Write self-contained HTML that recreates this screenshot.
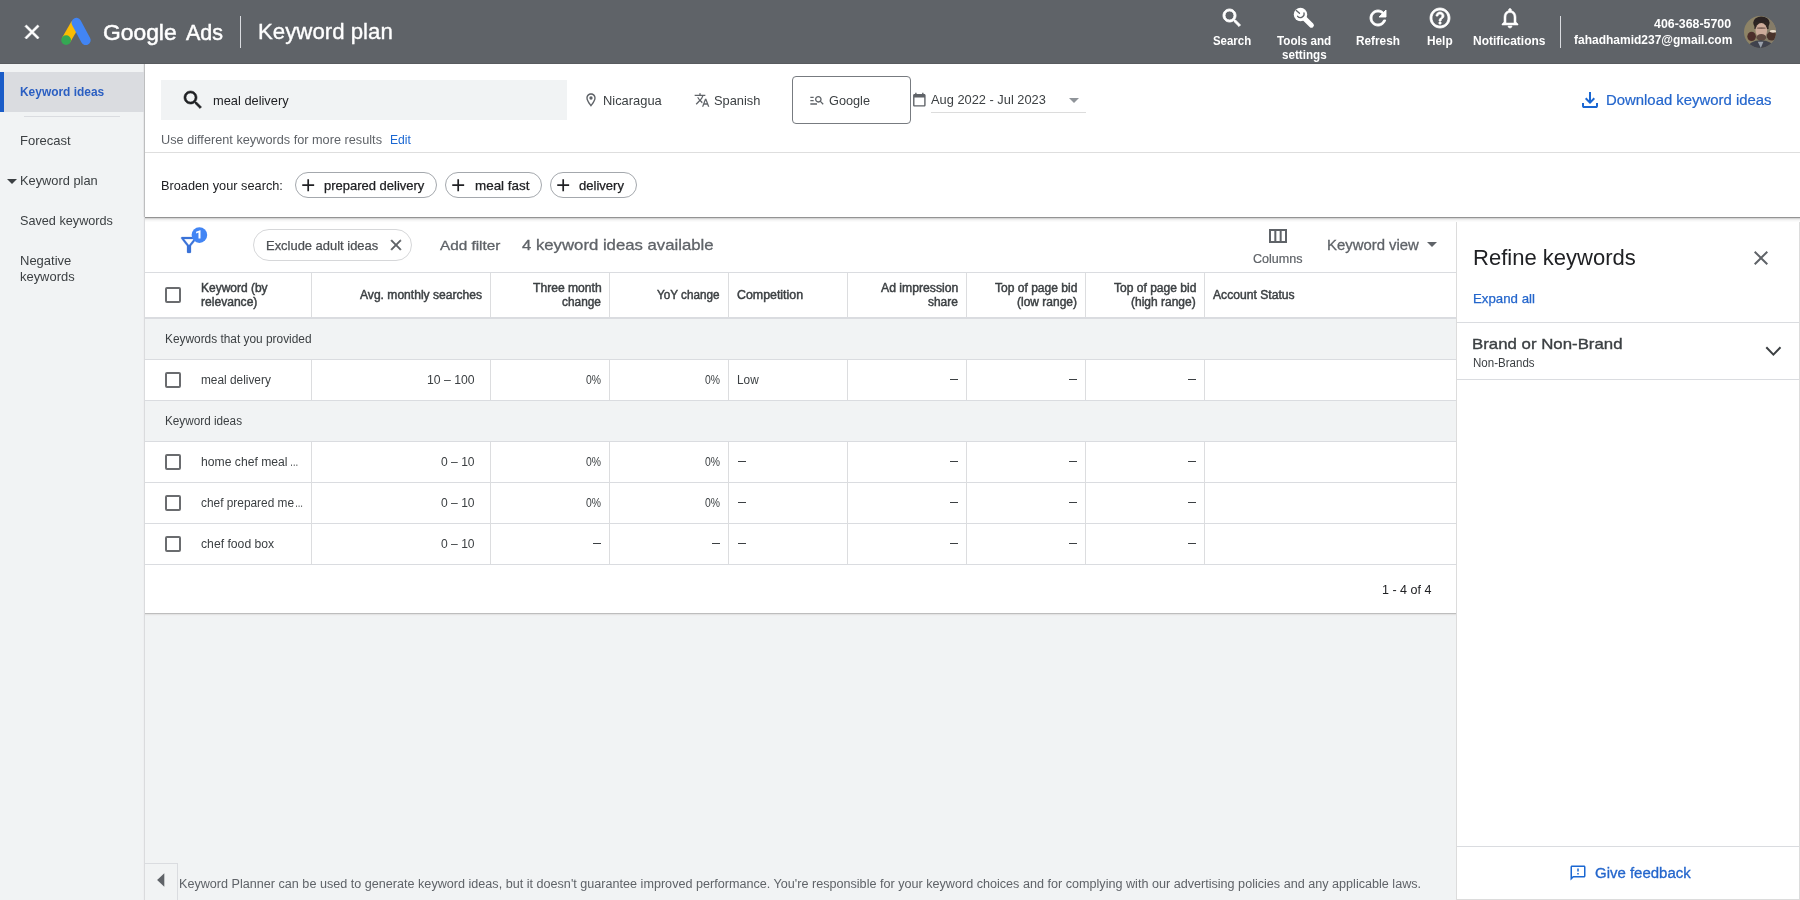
<!DOCTYPE html>
<html lang="en">
<head>
<meta charset="utf-8">
<title>Keyword plan - Google Ads</title>
<style>
*{box-sizing:border-box;margin:0;padding:0}
html,body{width:1800px;height:900px;overflow:hidden;background:#f1f3f4;font-family:"Liberation Sans",sans-serif}
.a{position:absolute}
.t{position:absolute;white-space:nowrap;line-height:1;transform-origin:0 0}
</style>
</head>
<body>
<div class="a" style="left:0px;top:0px;width:1800px;height:64px;background:#5f6368"></div>
<div class="a" style="left:0px;top:64px;width:144px;height:836px;background:#f1f3f4"></div>
<div class="a" style="left:0px;top:63px;width:1800px;height:1px;background:#585b5f"></div>
<div class="a" style="left:143px;top:64px;width:1px;height:153px;background:#e6e7e9"></div>
<div class="a" style="left:144px;top:64px;width:1px;height:153px;background:#bdbebf"></div>
<div class="a" style="left:143px;top:217px;width:1px;height:683px;background:#eeeff1"></div>
<div class="a" style="left:144px;top:217px;width:1px;height:683px;background:#dadbdd"></div>
<div class="a" style="left:145px;top:64px;width:1655px;height:153px;background:#fff"></div>
<div class="a" style="left:145px;top:218px;width:1311px;height:395px;background:#fff"></div>
<div class="a" style="left:1456px;top:218px;width:344px;height:682px;background:#fff;border:1px solid #dcdcdc;border-top:none"></div>
<div class="a" style="left:145px;top:217px;width:1655px;height:1px;background:#939393"></div>
<div class="a" style="left:145px;top:218px;width:1655px;height:1px;background:#d6d6d6"></div>
<div class="a" style="left:145px;top:219px;width:1655px;height:1px;background:#ececec"></div>
<div class="a" style="left:145px;top:220px;width:1655px;height:1px;background:#f6f6f6"></div>
<div class="a" style="left:145px;top:221px;width:1655px;height:1px;background:#fbfbfb"></div>
<div class="a" style="left:145px;top:613px;width:1311px;height:1px;background:#bdbdbd"></div>
<div class="a" style="left:145px;top:614px;width:1311px;height:1px;background:#e3e3e3"></div>
<div class="a" style="left:145px;top:615px;width:1311px;height:1px;background:#eeeff0"></div>
<svg class="a" style="left:20px;top:20px;overflow:visible" width="24" height="24" viewBox="0 0 24 24" fill="#fff" stroke="#fff" stroke-width="0.7" stroke-linejoin="round"><path d="M19 6.41L17.59 5 12 10.59 6.41 5 5 6.41 10.59 12 5 17.59 6.41 19 12 13.41 17.59 19 19 17.59 13.41 12z"/></svg>
<svg class="a" style="left:56px;top:12px" width="40" height="40" viewBox="56 12 40 40"><line x1="66.1" y1="40" x2="75.6" y2="23.6" stroke="#fbbc04" stroke-width="9.4" stroke-linecap="butt"/><line x1="76.4" y1="22.7" x2="85.8" y2="40.2" stroke="#4285f4" stroke-width="9.8" stroke-linecap="round"/><circle cx="66.1" cy="40.1" r="4.9" fill="#34a853"/></svg>
<div class="t" style="left:103.36px;top:22px;font-size:22px;color:#fff;transform:scaleX(1.0372);-webkit-text-stroke:0.5px #fff">Google</div>
<div class="t" style="left:185.60px;top:22px;font-size:22px;color:#fff;transform:scaleX(0.9760);-webkit-text-stroke:0.5px #fff">Ads</div>
<div class="a" style="left:240px;top:16px;width:1px;height:32px;background:#dadce0"></div>
<div class="t" style="left:257.69px;top:21px;font-size:22px;color:#fff;transform:scaleX(1.0110);-webkit-text-stroke:0.35px #fff">Keyword plan</div>
<svg class="a" style="left:1220.2px;top:6px;overflow:visible" width="24" height="24" viewBox="0 0 24 24" fill="#fff" stroke="#fff" stroke-width="0.9" stroke-linejoin="round"><path d="M15.5 14h-.79l-.28-.27C15.41 12.59 16 11.11 16 9.5 16 5.91 13.09 3 9.5 3S3 5.91 3 9.5 5.91 16 9.5 16c1.61 0 3.09-.59 4.23-1.57l.27.28v.79l5 4.99L20.49 19l-4.99-5zm-6 0C7.01 14 5 11.99 5 9.5S7.01 5 9.5 5 14 7.01 14 9.5 11.99 14 9.5 14z"/></svg>
<svg class="a" style="left:1365.8px;top:6px;overflow:visible" width="24" height="24" viewBox="0 0 24 24" fill="#fff" stroke="#fff" stroke-width="0.9" stroke-linejoin="round"><path d="M17.65 6.35C16.2 4.9 14.21 4 12 4c-4.42 0-7.99 3.58-7.99 8s3.57 8 7.99 8c3.73 0 6.84-2.55 7.73-6h-2.08c-.82 2.33-3.04 4-5.65 4-3.31 0-6-2.69-6-6s2.69-6 6-6c1.66 0 3.14.69 4.22 1.78L13 11h7V4l-2.35 2.35z"/></svg>
<svg class="a" style="left:1427.6px;top:6px;overflow:visible" width="24" height="24" viewBox="0 0 24 24" fill="#fff" stroke="#fff" stroke-width="0.8" stroke-linejoin="round"><path d="M11 18h2v-2h-2v2zm1-16C6.48 2 2 6.48 2 12s4.48 10 10 10 10-4.48 10-10S17.52 2 12 2zm0 18c-4.41 0-8-3.59-8-8s3.59-8 8-8 8 3.59 8 8-3.59 8-8 8zm0-14c-2.21 0-4 1.79-4 4h2c0-1.1.9-2 2-2s2 .9 2 2c0 2-3 1.75-3 5h2c0-2.25 3-2.5 3-5 0-2.21-1.79-4-4-4z"/></svg>
<svg class="a" style="left:1498px;top:6px;overflow:visible" width="24" height="24" viewBox="0 0 24 24" fill="#fff" stroke="#fff" stroke-width="0.55" stroke-linejoin="round"><path d="M12 22c1.1 0 2-.9 2-2h-4c0 1.1.9 2 2 2zm6-6v-5c0-3.07-1.63-5.64-4.5-6.32V4c0-.83-.67-1.5-1.5-1.5s-1.5.67-1.5 1.5v.68C7.64 5.36 6 7.92 6 11v5l-2 2v1h16v-1l-2-2zm-2 1H8v-6c0-2.48 1.51-4.5 4-4.5s4 2.02 4 4.5v6z"/></svg>
<svg class="a" style="left:1288px;top:2px" width="32" height="30" viewBox="1288 2 32 30"><circle cx="1300.5" cy="14.5" r="6.7" fill="#fff"/><line x1="1300.5" y1="14.5" x2="1311.4" y2="25.2" stroke="#fff" stroke-width="5" stroke-linecap="round"/><path d="M1296.3 10.4 L1299.5 13.3 M1297.6 16.3 A3.7 3.7 0 0 0 1304 13" stroke="#5f6368" stroke-width="1.3" fill="none" stroke-linecap="round"/></svg>
<div class="t" style="left:1213.30px;top:35px;font-size:12px;color:#fff;transform:scaleX(0.9523);font-weight:bold">Search</div>
<div class="t" style="left:1277.20px;top:35px;font-size:12px;color:#fff;transform:scaleX(0.9721);font-weight:bold">Tools and</div>
<div class="t" style="left:1281.70px;top:49px;font-size:12px;color:#fff;transform:scaleX(0.9712);font-weight:bold">settings</div>
<div class="t" style="left:1355.80px;top:35px;font-size:12px;color:#fff;transform:scaleX(0.9830);font-weight:bold">Refresh</div>
<div class="t" style="left:1427.00px;top:35px;font-size:12px;color:#fff;transform:scaleX(0.9854);font-weight:bold">Help</div>
<div class="t" style="left:1473.30px;top:35px;font-size:12px;color:#fff;transform:scaleX(0.9960);font-weight:bold">Notifications</div>
<div class="a" style="left:1560px;top:16px;width:1px;height:32px;background:#dadce0"></div>
<div class="t" style="left:1654.30px;top:18px;font-size:12px;color:#fff;transform:scaleX(1.0312);font-weight:bold">406-368-5700</div>
<div class="t" style="left:1574.00px;top:34px;font-size:12px;color:#fff;transform:scaleX(0.9997);font-weight:bold">fahadhamid237@gmail.com</div>
<svg class="a" style="left:1744px;top:16px" width="32" height="32" viewBox="0 0 32 32"><defs><clipPath id="av"><circle cx="16" cy="16" r="16"/></clipPath><filter id="bl" x="-20%" y="-20%" width="140%" height="140%"><feGaussianBlur stdDeviation="0.75"/></filter></defs>
<g clip-path="url(#av)"><rect width="32" height="32" fill="#8d8366"/><g filter="url(#bl)">
<rect x="22" y="0" width="10" height="32" fill="#857c68"/>
<ellipse cx="7.6" cy="20.4" rx="4.3" ry="4.6" fill="#4d2f2c"/>
<ellipse cx="27.8" cy="20" rx="5" ry="4.6" fill="#4a302b"/>
<ellipse cx="29" cy="15.3" rx="3.2" ry="1.4" fill="#eadccb"/>
<ellipse cx="17.4" cy="6.8" rx="8.2" ry="6.4" fill="#2a2220"/>
<rect x="10.4" y="6" width="14.2" height="7" fill="#2f2624"/>
<ellipse cx="17.3" cy="14.6" rx="5.8" ry="7.6" fill="#cdab9a"/>
<ellipse cx="17.3" cy="12.1" rx="4.6" ry="0.9" fill="#7d6258"/>
<ellipse cx="17.3" cy="21.4" rx="4.9" ry="3.5" fill="#5f4941"/>
<ellipse cx="16.8" cy="31.8" rx="13" ry="7.6" fill="#3f434d"/>
<path d="M13.8 25.8 L16.8 32 L19.4 25.8 Z" fill="#9aa0ab"/>
</g></g></svg>
<div class="a" style="left:0px;top:72px;width:144px;height:40px;background:#dadce0"></div>
<div class="a" style="left:0px;top:72px;width:4px;height:40px;background:#1a5cc8"></div>
<div class="t" style="left:20.20px;top:85px;font-size:13px;color:#2b5fc2;transform:scaleX(0.9178);font-weight:bold">Keyword ideas</div>
<div class="a" style="left:24px;top:116px;width:96px;height:1px;background:#dadce0"></div>
<div class="t" style="left:19.90px;top:134px;font-size:13px;color:#3c4043;transform:scaleX(1.0028)">Forecast</div>
<svg class="a" style="left:-0.2px;top:168.7px;overflow:visible" width="24" height="24" viewBox="0 0 24 24" fill="#3c4043"><path d="M7 10l5 5 5-5z"/></svg>
<div class="t" style="left:19.91px;top:174px;font-size:13px;color:#3c4043;transform:scaleX(0.9866)">Keyword plan</div>
<div class="t" style="left:19.90px;top:214px;font-size:13px;color:#3c4043;transform:scaleX(0.9741)">Saved keywords</div>
<div class="t" style="left:19.90px;top:254px;font-size:13px;color:#3c4043;transform:scaleX(1.0004)">Negative</div>
<div class="t" style="left:19.90px;top:270px;font-size:13px;color:#3c4043;transform:scaleX(0.9945)">keywords</div>
<div class="a" style="left:161px;top:80px;width:406px;height:40px;background:#f1f3f4"></div>
<svg class="a" style="left:181px;top:87.7px;overflow:visible" width="24" height="24" viewBox="0 0 24 24" fill="#202124" stroke="#202124" stroke-width="0.6" stroke-linejoin="round"><path d="M15.5 14h-.79l-.28-.27C15.41 12.59 16 11.11 16 9.5 16 5.91 13.09 3 9.5 3S3 5.91 3 9.5 5.91 16 9.5 16c1.61 0 3.09-.59 4.23-1.57l.27.28v.79l5 4.99L20.49 19l-4.99-5zm-6 0C7.01 14 5 11.99 5 9.5S7.01 5 9.5 5 14 7.01 14 9.5 11.99 14 9.5 14z"/></svg>
<div class="t" style="left:213.20px;top:94px;font-size:13px;color:#202124;transform:scaleX(0.9872)">meal delivery</div>
<svg class="a" style="left:583px;top:92px;overflow:visible" width="16" height="16" viewBox="0 0 24 24" fill="#5f6368"><path d="M12 2C8.13 2 5 5.13 5 9c0 5.25 7 13 7 13s7-7.75 7-13c0-3.87-3.13-7-7-7zM7 9c0-2.76 2.24-5 5-5s5 2.24 5 5c0 2.88-2.88 7.19-5 9.88C9.92 16.21 7 11.85 7 9z"/><circle cx="12" cy="9" r="2.5"/></svg>
<div class="t" style="left:602.51px;top:94px;font-size:13px;color:#3c4043;transform:scaleX(0.9911)">Nicaragua</div>
<svg class="a" style="left:694px;top:92px;overflow:visible" width="16" height="16" viewBox="0 0 24 24" fill="#5f6368"><path d="M12.87 15.07l-2.54-2.51.03-.03c1.74-1.94 2.98-4.17 3.71-6.53H17V4h-7V2H8v2H1v1.99h11.17C11.5 7.92 10.44 9.75 9 11.35 8.07 10.32 7.3 9.19 6.69 8h-2c.73 1.63 1.73 3.17 2.98 4.56l-5.09 5.02L4 19l5-5 3.11 3.11.76-2.04zM18.5 10h-2L12 22h2l1.12-3h4.75L21 22h2l-4.5-12zm-2.62 7l1.62-4.33L19.12 17h-3.24z"/></svg>
<div class="t" style="left:714.30px;top:94px;font-size:13px;color:#3c4043;transform:scaleX(0.9883)">Spanish</div>
<div class="a" style="left:792px;top:76px;width:119px;height:48px;border:1px solid #777b80;border-radius:4px"></div>
<svg class="a" style="left:808.5px;top:92.3px;overflow:visible" width="16" height="16" viewBox="0 0 24 24" fill="#5f6368"><path d="M7 9H2V7h5v2zm0 3H2v2h5v-2zm13.59 7l-3.83-3.83c-.8.52-1.74.83-2.76.83-2.76 0-5-2.24-5-5s2.24-5 5-5 5 2.24 5 5c0 1.02-.31 1.96-.83 2.75L22 17.59 20.59 19zM17 11c0-1.65-1.35-3-3-3s-3 1.35-3 3 1.35 3 3 3 3-1.35 3-3zM2 19h10v-2H2v2z"/></svg>
<div class="t" style="left:829.40px;top:94px;font-size:13px;color:#3c4043;transform:scaleX(0.9787)">Google</div>
<svg class="a" style="left:911.1px;top:92.2px;overflow:visible" width="16.7" height="16.7" viewBox="0 0 24 24" fill="#5f6368"><path d="M19 3h-1V1h-2v2H8V1H6v2H5c-1.11 0-1.99.9-1.99 2L3 19c0 1.1.89 2 2 2h14c1.1 0 2-.9 2-2V5c0-1.1-.9-2-2-2zm0 16H5V8h14v11z"/></svg>
<div class="t" style="left:930.90px;top:93px;font-size:13px;color:#3c4043;transform:scaleX(0.9868)">Aug 2022 - Jul 2023</div>
<svg class="a" style="left:1062.3px;top:87.7px;overflow:visible" width="24" height="24" viewBox="0 0 24 24" fill="#8f9499"><path d="M7 10l5 5 5-5z"/></svg>
<div class="a" style="left:931px;top:112px;width:155px;height:1px;background:#dcdcdc"></div>
<svg class="a" style="left:1578px;top:88px;overflow:visible" width="24" height="24" viewBox="0 0 24 24" fill="#1a67d2"><path d="M12 16 L7 11 l1.4 -1.45 L11 12.15 V4 h2 v8.15 l2.6 -2.6 L17 11 Z M6 20 q-.825 0 -1.4125 -.5875 T4 18 v-3 h2 v3 h12 v-3 h2 v3 q0 .825 -.5875 1.4125 T18 20 H6 Z"/></svg>
<div class="t" style="left:1605.94px;top:93px;font-size:14px;color:#2466cc;transform:scaleX(1.0631);-webkit-text-stroke:0.2px #2466cc">Download keyword ideas</div>
<div class="t" style="left:161.00px;top:134px;font-size:12px;color:#5f6368;transform:scaleX(1.0598)">Use different keywords for more results</div>
<div class="t" style="left:390.40px;top:134px;font-size:12px;color:#1a67d2;transform:scaleX(1.0120)">Edit</div>
<div class="a" style="left:145px;top:152px;width:1655px;height:1px;background:#dedede"></div>
<div class="t" style="left:160.92px;top:179px;font-size:13px;color:#202124;transform:scaleX(0.9806)">Broaden your search:</div>
<div class="a" style="left:295px;top:172px;width:142px;height:26px;border:1px solid #a4a8ad;border-radius:13px;background:#fff"></div>
<svg class="a" style="left:297.9px;top:174.8px;overflow:visible" width="20.4" height="20.4" viewBox="0 0 24 24" fill="#202124"><path d="M19 13h-6v6h-2v-6H5v-2h6V5h2v6h6v2z"/></svg>
<div class="t" style="left:324.00px;top:179px;font-size:13px;color:#202124;transform:scaleX(0.9986);-webkit-text-stroke:0.25px #202124">prepared delivery</div>
<div class="a" style="left:445px;top:172px;width:97px;height:26px;border:1px solid #a4a8ad;border-radius:13px;background:#fff"></div>
<svg class="a" style="left:448.3px;top:174.8px;overflow:visible" width="20.4" height="20.4" viewBox="0 0 24 24" fill="#202124"><path d="M19 13h-6v6h-2v-6H5v-2h6V5h2v6h6v2z"/></svg>
<div class="t" style="left:474.70px;top:179px;font-size:13px;color:#202124;transform:scaleX(1.0314);-webkit-text-stroke:0.25px #202124">meal fast</div>
<div class="a" style="left:550px;top:172px;width:87px;height:26px;border:1px solid #a4a8ad;border-radius:13px;background:#fff"></div>
<svg class="a" style="left:553.3px;top:174.8px;overflow:visible" width="20.4" height="20.4" viewBox="0 0 24 24" fill="#202124"><path d="M19 13h-6v6h-2v-6H5v-2h6V5h2v6h6v2z"/></svg>
<div class="t" style="left:579.30px;top:179px;font-size:13px;color:#202124;transform:scaleX(1.0045);-webkit-text-stroke:0.25px #202124">delivery</div>
<svg class="a" style="left:177.2px;top:233.2px;overflow:visible" width="24" height="24" viewBox="0 0 24 24" fill="#3a72d8" stroke="#3a72d8" stroke-width="0.25" stroke-linejoin="round"><path d="M7 6h10l-5.01 6.3L7 6zm-2.75-.39C6.27 8.2 10 13 10 13v6c0 .55.45 1 1 1h2c.55 0 1-.45 1-1v-6s3.72-4.8 5.74-7.39c.51-.66.04-1.61-.79-1.61H5.04c-.83 0-1.3.95-.79 1.61z"/></svg>
<svg class="a" style="left:191px;top:227px" width="17" height="17" viewBox="0 0 17 17"><circle cx="8.4" cy="8.1" r="7.8" fill="#4285f4"/></svg>
<svg class="a" style="left:190px;top:226px" width="20" height="20" viewBox="190 226 20 20"><path d="M200.5 230.3 V238.4 H198.5 V232.6 L196.1 233.4 V231.8 L200.1 230.3 Z" fill="#fff"/></svg>
<div class="a" style="left:253px;top:229px;width:159px;height:32px;border:1px solid #d6d7d9;border-radius:16px;background:#fff"></div>
<div class="t" style="left:265.50px;top:239px;font-size:13px;color:#4d5054;transform:scaleX(0.9952);-webkit-text-stroke:0.25px #4d5054">Exclude adult ideas</div>
<svg class="a" style="left:387px;top:236px;overflow:visible" width="18" height="18" viewBox="0 0 24 24" fill="#5f6368" stroke="#5f6368" stroke-width="0.7" stroke-linejoin="round"><path d="M19 6.41L17.59 5 12 10.59 6.41 5 5 6.41 10.59 12 5 17.59 6.41 19 12 13.41 17.59 19 19 17.59 13.41 12z"/></svg>
<div class="t" style="left:440.20px;top:239px;font-size:13px;color:#5f6368;transform:scaleX(1.1737);-webkit-text-stroke:0.3px #5f6368">Add filter</div>
<div class="t" style="left:522.40px;top:237px;font-size:15px;color:#5f6368;transform:scaleX(1.1154);-webkit-text-stroke:0.3px #5f6368">4 keyword ideas available</div>
<svg class="a" style="left:1266px;top:224.1px;overflow:visible" width="24" height="24" viewBox="0 0 24 24" fill="#5f6368"><path d="M3 5v14h18V5H3zm5.33 12H5V7h3.33v10zm5.34 0h-3.33V7h3.33v10zM19 17h-3.33V7H19v10z"/></svg>
<div class="t" style="left:1252.80px;top:253px;font-size:12px;color:#5f6368;transform:scaleX(1.0475);-webkit-text-stroke:0.2px #5f6368">Columns</div>
<div class="t" style="left:1326.64px;top:238px;font-size:14px;color:#5f6368;transform:scaleX(1.0631);-webkit-text-stroke:0.3px #5f6368">Keyword view</div>
<svg class="a" style="left:1420px;top:232.2px;overflow:visible" width="24" height="24" viewBox="0 0 24 24" fill="#5f6368"><path d="M7 10l5 5 5-5z"/></svg>
<div class="a" style="left:145px;top:272px;width:1311px;height:1px;background:#dadce0"></div>
<div class="a" style="left:145px;top:317px;width:1311px;height:2px;background:#dadce0"></div>
<div class="a" style="left:145px;top:319px;width:1311px;height:40px;background:#f1f3f4"></div>
<div class="a" style="left:145px;top:401px;width:1311px;height:40px;background:#f1f3f4"></div>
<div class="a" style="left:145px;top:359px;width:1311px;height:1px;background:#dadce0"></div>
<div class="a" style="left:145px;top:400px;width:1311px;height:1px;background:#dadce0"></div>
<div class="a" style="left:145px;top:441px;width:1311px;height:1px;background:#dadce0"></div>
<div class="a" style="left:145px;top:482px;width:1311px;height:1px;background:#dadce0"></div>
<div class="a" style="left:145px;top:523px;width:1311px;height:1px;background:#dadce0"></div>
<div class="a" style="left:145px;top:564px;width:1311px;height:1px;background:#dadce0"></div>
<div class="a" style="left:311px;top:273px;width:1px;height:44px;background:#dcdddf"></div>
<div class="a" style="left:311px;top:360px;width:1px;height:40px;background:#dcdddf"></div>
<div class="a" style="left:311px;top:442px;width:1px;height:122px;background:#dcdddf"></div>
<div class="a" style="left:490px;top:273px;width:1px;height:44px;background:#dcdddf"></div>
<div class="a" style="left:490px;top:360px;width:1px;height:40px;background:#dcdddf"></div>
<div class="a" style="left:490px;top:442px;width:1px;height:122px;background:#dcdddf"></div>
<div class="a" style="left:609px;top:273px;width:1px;height:44px;background:#dcdddf"></div>
<div class="a" style="left:609px;top:360px;width:1px;height:40px;background:#dcdddf"></div>
<div class="a" style="left:609px;top:442px;width:1px;height:122px;background:#dcdddf"></div>
<div class="a" style="left:728px;top:273px;width:1px;height:44px;background:#dcdddf"></div>
<div class="a" style="left:728px;top:360px;width:1px;height:40px;background:#dcdddf"></div>
<div class="a" style="left:728px;top:442px;width:1px;height:122px;background:#dcdddf"></div>
<div class="a" style="left:847px;top:273px;width:1px;height:44px;background:#dcdddf"></div>
<div class="a" style="left:847px;top:360px;width:1px;height:40px;background:#dcdddf"></div>
<div class="a" style="left:847px;top:442px;width:1px;height:122px;background:#dcdddf"></div>
<div class="a" style="left:966px;top:273px;width:1px;height:44px;background:#dcdddf"></div>
<div class="a" style="left:966px;top:360px;width:1px;height:40px;background:#dcdddf"></div>
<div class="a" style="left:966px;top:442px;width:1px;height:122px;background:#dcdddf"></div>
<div class="a" style="left:1085px;top:273px;width:1px;height:44px;background:#dcdddf"></div>
<div class="a" style="left:1085px;top:360px;width:1px;height:40px;background:#dcdddf"></div>
<div class="a" style="left:1085px;top:442px;width:1px;height:122px;background:#dcdddf"></div>
<div class="a" style="left:1204px;top:273px;width:1px;height:44px;background:#dcdddf"></div>
<div class="a" style="left:1204px;top:360px;width:1px;height:40px;background:#dcdddf"></div>
<div class="a" style="left:1204px;top:442px;width:1px;height:122px;background:#dcdddf"></div>
<div class="a" style="left:165px;top:287px;width:16px;height:16px;border:2px solid #6a6c6f;border-radius:2px;background:#fff"></div>
<div class="t" style="left:201.40px;top:282px;font-size:12px;color:#3c4043;transform:scaleX(0.9986);-webkit-text-stroke:0.45px #3c4043">Keyword (by</div>
<div class="t" style="left:201.40px;top:296px;font-size:12px;color:#3c4043;transform:scaleX(1.0066);-webkit-text-stroke:0.45px #3c4043">relevance)</div>
<div class="t" style="left:360.30px;top:289px;font-size:12px;color:#3c4043;transform:scaleX(1.0068);-webkit-text-stroke:0.45px #3c4043">Avg. monthly searches</div>
<div class="t" style="left:532.70px;top:282px;font-size:12px;color:#3c4043;transform:scaleX(1.0095);-webkit-text-stroke:0.45px #3c4043">Three month</div>
<div class="t" style="left:562.00px;top:296px;font-size:12px;color:#3c4043;transform:scaleX(0.9900);-webkit-text-stroke:0.45px #3c4043">change</div>
<div class="t" style="left:656.70px;top:289px;font-size:12px;color:#3c4043;transform:scaleX(0.9751);-webkit-text-stroke:0.45px #3c4043">YoY change</div>
<div class="t" style="left:737.30px;top:289px;font-size:12px;color:#3c4043;transform:scaleX(1.0322);-webkit-text-stroke:0.45px #3c4043">Competition</div>
<div class="t" style="left:881.00px;top:282px;font-size:12px;color:#3c4043;transform:scaleX(1.0178);-webkit-text-stroke:0.45px #3c4043">Ad impression</div>
<div class="t" style="left:928.30px;top:296px;font-size:12px;color:#3c4043;transform:scaleX(0.9953);-webkit-text-stroke:0.45px #3c4043">share</div>
<div class="t" style="left:995.00px;top:282px;font-size:12px;color:#3c4043;transform:scaleX(1.0038);-webkit-text-stroke:0.45px #3c4043">Top of page bid</div>
<div class="t" style="left:1016.70px;top:296px;font-size:12px;color:#3c4043;transform:scaleX(0.9995);-webkit-text-stroke:0.45px #3c4043">(low range)</div>
<div class="t" style="left:1114.00px;top:282px;font-size:12px;color:#3c4043;transform:scaleX(1.0038);-webkit-text-stroke:0.45px #3c4043">Top of page bid</div>
<div class="t" style="left:1131.00px;top:296px;font-size:12px;color:#3c4043;transform:scaleX(0.9999);-webkit-text-stroke:0.45px #3c4043">(high range)</div>
<div class="t" style="left:1213.30px;top:289px;font-size:12px;color:#3c4043;transform:scaleX(1.0122);-webkit-text-stroke:0.45px #3c4043">Account Status</div>
<div class="t" style="left:164.60px;top:333px;font-size:12px;color:#3c4043;transform:scaleX(0.9898)">Keywords that you provided</div>
<div class="t" style="left:164.60px;top:415px;font-size:12px;color:#3c4043;transform:scaleX(0.9783)">Keyword ideas</div>
<div class="a" style="left:165px;top:372.2px;width:16px;height:16px;border:2px solid #6a6c6f;border-radius:2px;background:#fff"></div><div class="t" style="left:200.70px;top:374px;font-size:12px;color:#3c4043;transform:scaleX(0.9874)">meal delivery</div><div class="t" style="left:426.60px;top:374px;font-size:12px;color:#3c4043;transform:scaleX(1.0183)">10 – 100</div><div class="t" style="left:586.00px;top:374px;font-size:12px;color:#3c4043;transform:scaleX(0.8657)">0%</div><div class="t" style="left:705.00px;top:374px;font-size:12px;color:#3c4043;transform:scaleX(0.8657)">0%</div><div class="t" style="left:737.30px;top:374px;font-size:12px;color:#3c4043;transform:scaleX(0.9844)">Low</div><div class="a" style="left:949.5px;top:379.2px;width:8.2px;height:1px;background:#3c4043"></div><div class="a" style="left:1068.5px;top:379.2px;width:8.2px;height:1px;background:#3c4043"></div><div class="a" style="left:1187.5px;top:379.2px;width:8.2px;height:1px;background:#3c4043"></div>
<div class="a" style="left:165px;top:454.2px;width:16px;height:16px;border:2px solid #6a6c6f;border-radius:2px;background:#fff"></div><div class="t" style="left:290.10px;top:456px;font-size:12px;color:#3c4043;transform:scaleX(0.7000)">…</div><div class="t" style="left:200.70px;top:456px;font-size:12px;color:#3c4043;transform:scaleX(1.0140)">home chef meal</div><div class="t" style="left:440.60px;top:456px;font-size:12px;color:#3c4043;transform:scaleX(1.0062)">0 – 10</div><div class="t" style="left:586.00px;top:456px;font-size:12px;color:#3c4043;transform:scaleX(0.8657)">0%</div><div class="t" style="left:705.00px;top:456px;font-size:12px;color:#3c4043;transform:scaleX(0.8657)">0%</div><div class="a" style="left:737.5px;top:461.2px;width:8.2px;height:1px;background:#3c4043"></div><div class="a" style="left:949.5px;top:461.2px;width:8.2px;height:1px;background:#3c4043"></div><div class="a" style="left:1068.5px;top:461.2px;width:8.2px;height:1px;background:#3c4043"></div><div class="a" style="left:1187.5px;top:461.2px;width:8.2px;height:1px;background:#3c4043"></div>
<div class="a" style="left:165px;top:495.2px;width:16px;height:16px;border:2px solid #6a6c6f;border-radius:2px;background:#fff"></div><div class="t" style="left:294.72px;top:497px;font-size:12px;color:#3c4043;transform:scaleX(0.6800)">…</div><div class="t" style="left:200.70px;top:497px;font-size:12px;color:#3c4043;transform:scaleX(0.9896)">chef prepared me</div><div class="t" style="left:440.60px;top:497px;font-size:12px;color:#3c4043;transform:scaleX(1.0062)">0 – 10</div><div class="t" style="left:586.00px;top:497px;font-size:12px;color:#3c4043;transform:scaleX(0.8657)">0%</div><div class="t" style="left:705.00px;top:497px;font-size:12px;color:#3c4043;transform:scaleX(0.8657)">0%</div><div class="a" style="left:737.5px;top:502.2px;width:8.2px;height:1px;background:#3c4043"></div><div class="a" style="left:949.5px;top:502.2px;width:8.2px;height:1px;background:#3c4043"></div><div class="a" style="left:1068.5px;top:502.2px;width:8.2px;height:1px;background:#3c4043"></div><div class="a" style="left:1187.5px;top:502.2px;width:8.2px;height:1px;background:#3c4043"></div>
<div class="a" style="left:165px;top:536.2px;width:16px;height:16px;border:2px solid #6a6c6f;border-radius:2px;background:#fff"></div><div class="t" style="left:200.70px;top:538px;font-size:12px;color:#3c4043;transform:scaleX(1.0159)">chef food box</div><div class="t" style="left:440.60px;top:538px;font-size:12px;color:#3c4043;transform:scaleX(1.0062)">0 – 10</div><div class="a" style="left:592.5px;top:543.2px;width:8.2px;height:1px;background:#3c4043"></div><div class="a" style="left:711.5px;top:543.2px;width:8.2px;height:1px;background:#3c4043"></div><div class="a" style="left:737.5px;top:543.2px;width:8.2px;height:1px;background:#3c4043"></div><div class="a" style="left:949.5px;top:543.2px;width:8.2px;height:1px;background:#3c4043"></div><div class="a" style="left:1068.5px;top:543.2px;width:8.2px;height:1px;background:#3c4043"></div><div class="a" style="left:1187.5px;top:543.2px;width:8.2px;height:1px;background:#3c4043"></div>
<div class="t" style="left:1382.30px;top:584px;font-size:12px;color:#202124;transform:scaleX(1.0422)">1 - 4 of 4</div>
<div class="t" style="left:1473.00px;top:247px;font-size:22px;color:#202124;transform:scaleX(1.0005)">Refine keywords</div>
<svg class="a" style="left:1749.2px;top:246.3px;overflow:visible" width="24" height="24" viewBox="0 0 24 24" fill="#5f6368"><path d="M19 6.41L17.59 5 12 10.59 6.41 5 5 6.41 10.59 12 5 17.59 6.41 19 12 13.41 17.59 19 19 17.59 13.41 12z"/></svg>
<div class="t" style="left:1472.78px;top:292px;font-size:13px;color:#2466cc;transform:scaleX(1.0197);-webkit-text-stroke:0.25px #2466cc">Expand all</div>
<div class="a" style="left:1457px;top:322px;width:342px;height:1px;background:#dadce0"></div>
<div class="t" style="left:1472.48px;top:336px;font-size:15px;color:#3c4043;transform:scaleX(1.1212);-webkit-text-stroke:0.35px #3c4043">Brand or Non-Brand</div>
<div class="t" style="left:1473.20px;top:357px;font-size:12px;color:#3c4043;transform:scaleX(0.9620)">Non-Brands</div>
<svg class="a" style="left:1760px;top:340px" width="28" height="24" viewBox="1760 340 28 24"><polyline points="1766.3,347.3 1773.4,354.6 1780.5,347.3" fill="none" stroke="#3c4043" stroke-width="2"/></svg>
<div class="a" style="left:1457px;top:379px;width:342px;height:1px;background:#dadce0"></div>
<div class="a" style="left:1457px;top:846px;width:342px;height:1px;background:#dadce0"></div>
<svg class="a" style="left:1568.6px;top:863.8px;overflow:visible" width="18" height="18" viewBox="0 0 24 24" fill="#1a67d2"><path d="M20 2H4c-1.1 0-1.99.9-1.99 2L2 22l4-4h14c1.1 0 2-.9 2-2V4c0-1.1-.9-2-2-2zm0 14H5.17l-.59.59-.58.58V4h16v12zm-9-4h2v2h-2zm0-6h2v4h-2z"/></svg>
<div class="t" style="left:1594.60px;top:866px;font-size:14px;color:#2466cc;transform:scaleX(1.0697);-webkit-text-stroke:0.3px #2466cc">Give feedback</div>
<div class="a" style="left:145px;top:863px;width:33px;height:37px;border:1px solid #dadce0;border-left:none;border-bottom:none;background:#f1f3f4"></div>
<svg class="a" style="left:150px;top:868px" width="24" height="24" viewBox="150 868 24 24"><polygon points="164.3,873.2 157.1,880 164.3,886.8" fill="#5f6368"/></svg>
<div class="t" style="left:179.00px;top:878px;font-size:12px;color:#5f6368;transform:scaleX(1.0509)">Keyword Planner can be used to generate keyword ideas, but it doesn&#x27;t guarantee improved performance. You&#x27;re responsible for your keyword choices and for complying with our advertising policies and any applicable laws.</div>
</body>
</html>
